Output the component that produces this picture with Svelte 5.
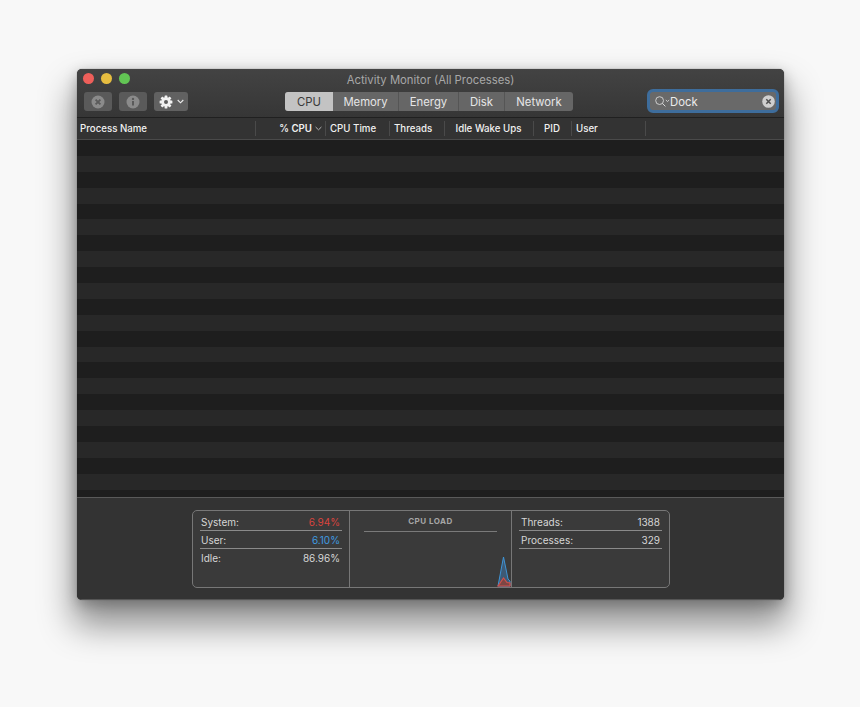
<script lang="ts">
  const tabs = ['CPU', 'Memory', 'Energy', 'Disk', 'Network'];
  const columns = [
    { label: 'Process Name', width: 179, cls: 'name' },
    { label: '% CPU', width: 70, cls: 'cpu sorted' },
    { label: 'CPU Time', width: 64, cls: '' },
    { label: 'Threads', width: 55, cls: '' },
    { label: 'Idle Wake Ups', width: 89, cls: 'center' },
    { label: 'PID', width: 38, cls: 'center' },
    { label: 'User', width: 74, cls: '' },
  ];
  const rows = Array.from({ length: 23 }, (_, i) => i);
  const cpuStats = [
    { label: 'System:', value: '6.94%', tone: 'red' },
    { label: 'User:', value: '6.10%', tone: 'blue' },
    { label: 'Idle:', value: '86.96%', tone: '' },
  ];
  const counts = [
    { label: 'Threads:', value: '1388' },
    { label: 'Processes:', value: '329' },
  ];
</script>

<main class="page">
  <section class="window">
    <header class="toolbar">
      <div class="lights">
        <span class="light close"></span>
        <span class="light min"></span>
        <span class="light max"></span>
      </div>
      <h1>Activity Monitor (All Processes)</h1>
      <div class="controls">
        <div class="actions">
          <button class="tool" aria-label="Quit process">
            <svg width="14" height="14" viewBox="0 0 14 14">
              <circle cx="7" cy="7" r="6.5" fill="#8b8b8b" />
              <path d="M4.6 4.6l4.8 4.8M9.4 4.6l-4.8 4.8" stroke="#5a5a5a" stroke-width="1.8" />
            </svg>
          </button>
          <button class="tool" aria-label="Inspect">
            <svg width="14" height="14" viewBox="0 0 14 14">
              <circle cx="7" cy="7" r="6.5" fill="#8b8b8b" />
              <path d="M7 6v4.6" stroke="#5a5a5a" stroke-width="2" />
              <circle cx="7" cy="3.9" r="1.2" fill="#5a5a5a" />
            </svg>
          </button>
          <button class="tool gear" aria-label="Actions">
            <svg width="14" height="14" viewBox="0 0 14 14">
              <g fill="#f2f2f2">
                <circle cx="7" cy="7" r="4.7" />
                <rect x="5.6" y="0.6" width="2.8" height="12.8" rx="0.5" />
                <rect x="5.6" y="0.6" width="2.8" height="12.8" rx="0.5" transform="rotate(45 7 7)" />
                <rect x="5.6" y="0.6" width="2.8" height="12.8" rx="0.5" transform="rotate(90 7 7)" />
                <rect x="5.6" y="0.6" width="2.8" height="12.8" rx="0.5" transform="rotate(135 7 7)" />
              </g>
              <circle cx="7" cy="7" r="2" fill="#5f5f5f" />
            </svg>
            <svg width="7" height="5" viewBox="0 0 7 5">
              <path d="M.7 1l2.8 2.8L6.3 1" fill="none" stroke="#eee" stroke-width="1.1" />
            </svg>
          </button>
        </div>
        <div class="tabs">
          {#each tabs as tab, i}
            <span class="tab" class:active={i === 0}>{tab}</span>
          {/each}
        </div>
        <div class="search">
          <svg class="glass" width="15.5" height="11" viewBox="0 0 15.5 11">
            <circle cx="4.6" cy="4.6" r="3.9" fill="none" stroke="#d8d8d8" stroke-width="0.9" />
            <path d="M7.4 7.4l3 3" stroke="#d8d8d8" stroke-width="1" />
            <path d="M10.8 4l1.7 1.5L14.2 4" fill="none" stroke="#d8d8d8" stroke-width="0.9" />
          </svg>
          <span class="query">Dock</span>
          <span class="clear">
            <svg width="13" height="13" viewBox="0 0 13 13">
              <circle cx="6.5" cy="6.5" r="6.3" fill="#cfcfcf" />
              <path d="M4.3 4.3l4.4 4.4M8.7 4.3l-4.4 4.4" stroke="#4f4f4f" stroke-width="1.5" />
            </svg>
          </span>
        </div>
      </div>
    </header>

    <div class="columns">
      {#each columns as col}
        <div class="col {col.cls}" style="width: {col.width}px">
          <span>{col.label}</span>
          {#if col.cls.includes('sorted')}
            <svg width="7" height="5" viewBox="0 0 7 5">
              <path d="M.6 1l2.9 2.8L6.4 1" fill="none" stroke="#b5b5b5" stroke-width="1" />
            </svg>
          {/if}
        </div>
      {/each}
    </div>

    <div class="rows">
      {#each rows as row}
        <div class="row" class:odd={row % 2 === 1}></div>
      {/each}
    </div>

    <footer class="footer">
      <div class="panel">
        <div class="stats">
          {#each cpuStats as stat, i}
            <div class="stat" class:ruled={i < 2}>
              <span>{stat.label}</span>
              <span class={stat.tone}>{stat.value}</span>
            </div>
          {/each}
        </div>
        <div class="load">
          <div class="load-title">CPU LOAD</div>
          <svg class="graph" width="147" height="32" viewBox="0 0 147 32">
            <path d="M134 31L139.5 2L144 24L146 26V31Z" fill="#3d5a75" stroke="#3f94d6" stroke-width="1" />
            <path d="M134 31L139.5 23L143 27.5L146 28V31Z" fill="#7d4644" stroke="#d2504a" stroke-width="1.2" />
          </svg>
        </div>
        <div class="stats right">
          {#each counts as stat}
            <div class="stat ruled">
              <span>{stat.label}</span>
              <span>{stat.value}</span>
            </div>
          {/each}
        </div>
      </div>
    </footer>
  </section>
</main>

<style>
  :global(body) {
    margin: 0;
    background: #f8f8f8;
  }
  .page {
    height: 707px;
    box-sizing: border-box;
    padding: 69px 76px 0 77px;
    font-family: Inter, 'Liberation Sans', sans-serif;
    overflow: hidden;
  }
  .window {
    width: 707px;
    height: 531px;
    display: flex;
    flex-direction: column;
    border-radius: 5px;
    overflow: hidden;
    background: #333;
    box-shadow: 0 0 1px #555, 0 22px 34px 4px rgba(0, 0, 0, 0.42), 0 4px 14px rgba(0, 0, 0, 0.25);
  }
  .toolbar {
    position: relative;
    height: 49px;
    flex: none;
    box-sizing: border-box;
    background: linear-gradient(#434343, #363636);
    border-bottom: 1px solid #202020;
  }
  .lights {
    position: absolute;
    left: 6px;
    top: 4px;
    display: flex;
    gap: 7px;
  }
  .light {
    width: 11px;
    height: 11px;
    border-radius: 50%;
  }
  .close { background: #ee5f5a; }
  .min { background: #e6bd40; }
  .max { background: #62c554; }
  h1 {
    margin: 0;
    padding-top: 4px;
    text-align: center;
    font-size: 11.3px;
    line-height: 14px;
    font-weight: 400;
    color: #a8a8a8;
  }
  .controls {
    position: absolute;
    left: 7px;
    top: 20px;
    right: 5px;
    display: flex;
    align-items: flex-start;
  }
  .actions {
    display: flex;
    gap: 7px;
    width: 201px;
    margin-top: 3px;
  }
  .tool {
    width: 28px;
    height: 19px;
    padding: 0;
    display: flex;
    align-items: center;
    justify-content: center;
    gap: 4px;
    border: 0;
    border-radius: 3px;
    background: #5a5a5a;
  }
  .gear {
    width: 34px;
    background: #616161;
  }
  .tabs {
    width: 288px;
    height: 19px;
    margin-top: 3px;
    display: flex;
    border-radius: 3px;
    overflow: hidden;
    background: #666;
  }
  .tab {
    flex: none;
    display: flex;
    align-items: center;
    justify-content: center;
    box-sizing: border-box;
    font-size: 11.3px;
    color: #e6e6e6;
    border-right: 1px solid #555;
  }
  .tab:nth-child(1) { width: 48px; }
  .tab:nth-child(2) { width: 66px; }
  .tab:nth-child(3) { width: 60px; }
  .tab:nth-child(4) { width: 46px; }
  .tab:nth-child(5) { width: 68px; border-right: 0; }
  .tab.active {
    background: #c3c3c3;
    color: #3a3a3a;
    border-right: 0;
  }
  .search {
    margin-left: auto;
    width: 132px;
    height: 24px;
    box-sizing: border-box;
    display: flex;
    align-items: center;
    padding: 0 1px 0 4.5px;
    border: 3px solid #3e6d9c;
    border-radius: 6px;
    background: #696969;
  }
  .glass {
    flex: none;
    margin-top: 1px;
  }
  .query {
    flex: 1;
    margin-top: 1px;
    font-size: 11.3px;
    color: #ececec;
  }
  .clear {
    display: flex;
  }
  .columns {
    height: 21px;
    flex: none;
    display: flex;
    align-items: center;
    background: #333;
    border-bottom: 1px solid #4a4a4a;
  }
  .col {
    height: 15px;
    flex: none;
    box-sizing: border-box;
    display: flex;
    align-items: center;
    gap: 3px;
    padding-left: 4px;
    font-size: 9.7px;
    font-weight: 500;
    color: #f0f0f0;
    white-space: nowrap;
    border-right: 1px solid #4a4a4a;
  }
  .col.name {
    padding-left: 3px;
  }
  .col.cpu {
    justify-content: flex-end;
    padding-right: 3px;
    font-weight: 600;
  }
  .col.center {
    justify-content: center;
    padding: 0 1px 0 0;
  }
  .rows {
    flex: 1;
    overflow: hidden;
    background: #1e1e1e;
  }
  .row {
    height: 15.9px;
    background: #1e1e1e;
  }
  .row.odd {
    background: #282828;
  }
  .footer {
    height: 103px;
    flex: none;
    box-sizing: border-box;
    padding: 12px 0 0 115px;
    background: #333;
    border-top: 1px solid #5a5a5a;
    box-shadow: inset 0 -1px 0 #555;
  }
  .panel {
    width: 478px;
    height: 78px;
    box-sizing: border-box;
    display: flex;
    border: 1px solid #777;
    border-radius: 5px;
    background: #3a3a3a;
  }
  .stats {
    width: 157px;
    flex: none;
    box-sizing: border-box;
    padding: 2px 7px 0;
    border-right: 1px solid #777;
  }
  .stats.right {
    width: auto;
    flex: 1;
    border-right: 0;
  }
  .stats.right .stat {
    padding-left: 2px;
  }
  .stat {
    height: 18px;
    box-sizing: border-box;
    display: flex;
    justify-content: space-between;
    align-items: center;
    padding: 0 2px 0 1px;
    font-size: 10px;
    color: #d6d6d6;
  }
  .stat.ruled {
    border-bottom: 1px solid #8a8a8a;
  }
  .red { color: #d9443e; }
  .blue { color: #3f9be0; }
  .load {
    width: 162px;
    flex: none;
    display: flex;
    flex-direction: column;
    align-items: center;
    box-sizing: border-box;
    border-right: 1px solid #777;
  }
  .load-title {
    width: 133px;
    height: 14px;
    margin-top: 6px;
    text-align: center;
    font-size: 8px;
    line-height: 9px;
    font-weight: 700;
    letter-spacing: 0.5px;
    color: #a6a6a6;
    border-bottom: 1px solid #7a7a7a;
  }
  .graph {
    margin-top: auto;
    display: block;
    align-self: flex-end;
  }
</style>
